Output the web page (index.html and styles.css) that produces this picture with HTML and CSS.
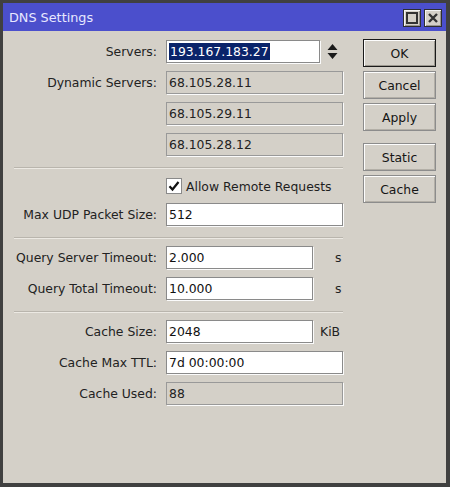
FILE: index.html
```html
<!DOCTYPE html>
<html>
<head>
<meta charset="utf-8">
<link rel="stylesheet" href="styles.css">
</head>
<body>
<div class="window">
  <div class="titlebar">
    <span class="title">DNS Settings</span>
    <div class="tb-buttons">
      <span class="tb-btn"><svg width="12" height="12" viewBox="0 0 12 12"><rect x="1" y="1" width="10" height="10" fill="none" stroke="#333" stroke-width="2"/></svg></span>
      <span class="tb-btn"><svg width="12" height="12" viewBox="0 0 12 12"><path d="M2 2L10 10M10 2L2 10" stroke="#333" stroke-width="2.4"/></svg></span>
    </div>
  </div>
  <div class="body">
    <div class="form">
      <div class="row">
        <label class="lbl">Servers:</label>
        <div class="cell">
          <div class="field servers"><span class="sel">193.167.183.27</span></div>
          <svg class="spin" width="11" height="17" viewBox="0 0 11 17"><path d="M5.5 1L10.5 7H0.5Z M0.5 10H10.5L5.5 16Z" fill="#1a1a1a"/></svg>
        </div>
      </div>
      <div class="row">
        <label class="lbl">Dynamic Servers:</label>
        <div class="cell"><div class="field wide ro">68.105.28.11</div></div>
      </div>
      <div class="row">
        <span class="lbl"></span>
        <div class="cell"><div class="field wide ro">68.105.29.11</div></div>
      </div>
      <div class="row">
        <span class="lbl"></span>
        <div class="cell"><div class="field wide ro">68.105.28.12</div></div>
      </div>
      <div class="sep"></div>
      <div class="row check-row">
        <span class="lbl"></span>
        <div class="cell">
          <span class="checkbox"><svg width="12" height="12" viewBox="0 0 12 12"><path d="M1.5 6.2L4.5 9.5L10.5 2" fill="none" stroke="#111" stroke-width="2.2"/></svg></span>
          <span class="check-text">Allow Remote Requests</span>
        </div>
      </div>
      <div class="row">
        <label class="lbl">Max UDP Packet Size:</label>
        <div class="cell"><div class="field wide">512</div></div>
      </div>
      <div class="sep"></div>
      <div class="row">
        <label class="lbl">Query Server Timeout:</label>
        <div class="cell"><div class="field short">2.000</div><span class="unit unit-s">s</span></div>
      </div>
      <div class="row">
        <label class="lbl">Query Total Timeout:</label>
        <div class="cell"><div class="field short">10.000</div><span class="unit unit-s">s</span></div>
      </div>
      <div class="sep"></div>
      <div class="row">
        <label class="lbl">Cache Size:</label>
        <div class="cell"><div class="field short">2048</div><span class="unit unit-kib">KiB</span></div>
      </div>
      <div class="row">
        <label class="lbl">Cache Max TTL:</label>
        <div class="cell"><div class="field wide">7d 00:00:00</div></div>
      </div>
      <div class="row">
        <label class="lbl">Cache Used:</label>
        <div class="cell"><div class="field wide ro">88</div></div>
      </div>
    </div>
    <div class="buttons">
      <div class="btn default">OK</div>
      <div class="btn">Cancel</div>
      <div class="btn">Apply</div>
      <div class="btn gap">Static</div>
      <div class="btn">Cache</div>
    </div>
  </div>
</div>
</body>
</html>
```
FILE: styles.css
```css
html, body {
  margin: 0;
  padding: 0;
  background: #d4d0c8;
}
body {
  font-family: "DejaVu Sans", "Noto Sans", sans-serif;
  font-size: 12.4px;
  color: #1e1e1e;
}
.window {
  width: 450px;
  height: 487px;
  box-sizing: border-box;
  border-style: solid;
  border-color: #404040;
  border-width: 3px 4px 4px 3px;
  display: flex;
  flex-direction: column;
  background: #d4d0c8;
}
.titlebar {
  height: 28px;
  flex: none;
  background: #4b4fcc;
  display: flex;
  align-items: center;
  justify-content: space-between;
}
.title {
  padding-left: 6px;
  color: #e8e8ff;
  font-size: 12.8px;
  padding-top: 1px;
}
.tb-buttons {
  display: flex;
  gap: 3px;
  margin-right: 4px;
  padding-top: 2px;
}
.tb-btn {
  width: 18px;
  height: 18px;
  box-sizing: border-box;
  background: #d4d0c8;
  border: 1px solid #2e2e2e;
  box-shadow: inset 1px 1px 0 #f4f4f4, inset -1px -1px 0 #9a968f;
  display: flex;
  align-items: center;
  justify-content: center;
}
.body {
  flex: 1;
  display: flex;
  align-items: flex-start;
}
.form {
  width: 352px;
  padding-top: 9px;
  display: flex;
  flex-direction: column;
}
.row {
  display: grid;
  grid-template-columns: 154px 1fr;
  column-gap: 9px;
  align-items: center;
  height: 23px;
  margin-bottom: 8px;
}
.lbl {
  text-align: right;
  white-space: nowrap;
  color: #222;
}
.cell {
  display: flex;
  align-items: center;
}
.field {
  height: 23px;
  box-sizing: border-box;
  border: 1px solid #8a8a8a;
  background: #ffffff;
  box-shadow: 1px 1px 0 #fbfbfb;
  padding: 0 2px;
  line-height: 21px;
  color: #111;
  white-space: nowrap;
  overflow: hidden;
}
.field.ro {
  background: #d4d0c8;
  border-color: #999;
  color: #222;
}
.wide { width: 177px; }
.servers { width: 154px; padding-left: 2px; }
.short { width: 147px; }
.sel {
  background: #0a246a;
  color: #fff;
  display: inline-block;
  line-height: 17px;
  padding: 0 1px;
}
.spin { margin-left: 7px; }
.unit { color: #222; }
.unit-s { margin-left: 22px; }
.unit-kib { margin-left: 7px; }
.sep {
  margin: 3px 0 7px 11px;
  width: 329px;
  height: 1px;
  background: #b9b5ad;
  border-bottom: 1px solid #ece9e3;
}
.check-row {
  height: 18px;
  margin-top: 1px;
  margin-bottom: 8px;
}
.checkbox {
  width: 16px;
  height: 16px;
  box-sizing: border-box;
  border: 1px solid #8a8a8a;
  background: #fff;
  display: flex;
  align-items: center;
  justify-content: center;
}
.check-text {
  margin-left: 4px;
  color: #1e1e1e;
}
.buttons {
  width: 73px;
  margin-left: 8px;
  padding-top: 8px;
  display: flex;
  flex-direction: column;
  gap: 4px;
}
.btn {
  height: 28px;
  box-sizing: border-box;
  border: 1px solid #8c8c8c;
  background: #d4d0c8;
  box-shadow: inset 1px 1px 0 #fdfdfd, inset -1px -1px 0 #b3afa7;
  display: flex;
  align-items: center;
  justify-content: center;
  color: #151515;
}
.btn.default {
  border-color: #1a1a1a;
  box-shadow: inset 1px 1px 0 #fdfdfd, inset -1px -1px 0 #9c988f;
}
.btn.gap { margin-top: 8px; }
```
